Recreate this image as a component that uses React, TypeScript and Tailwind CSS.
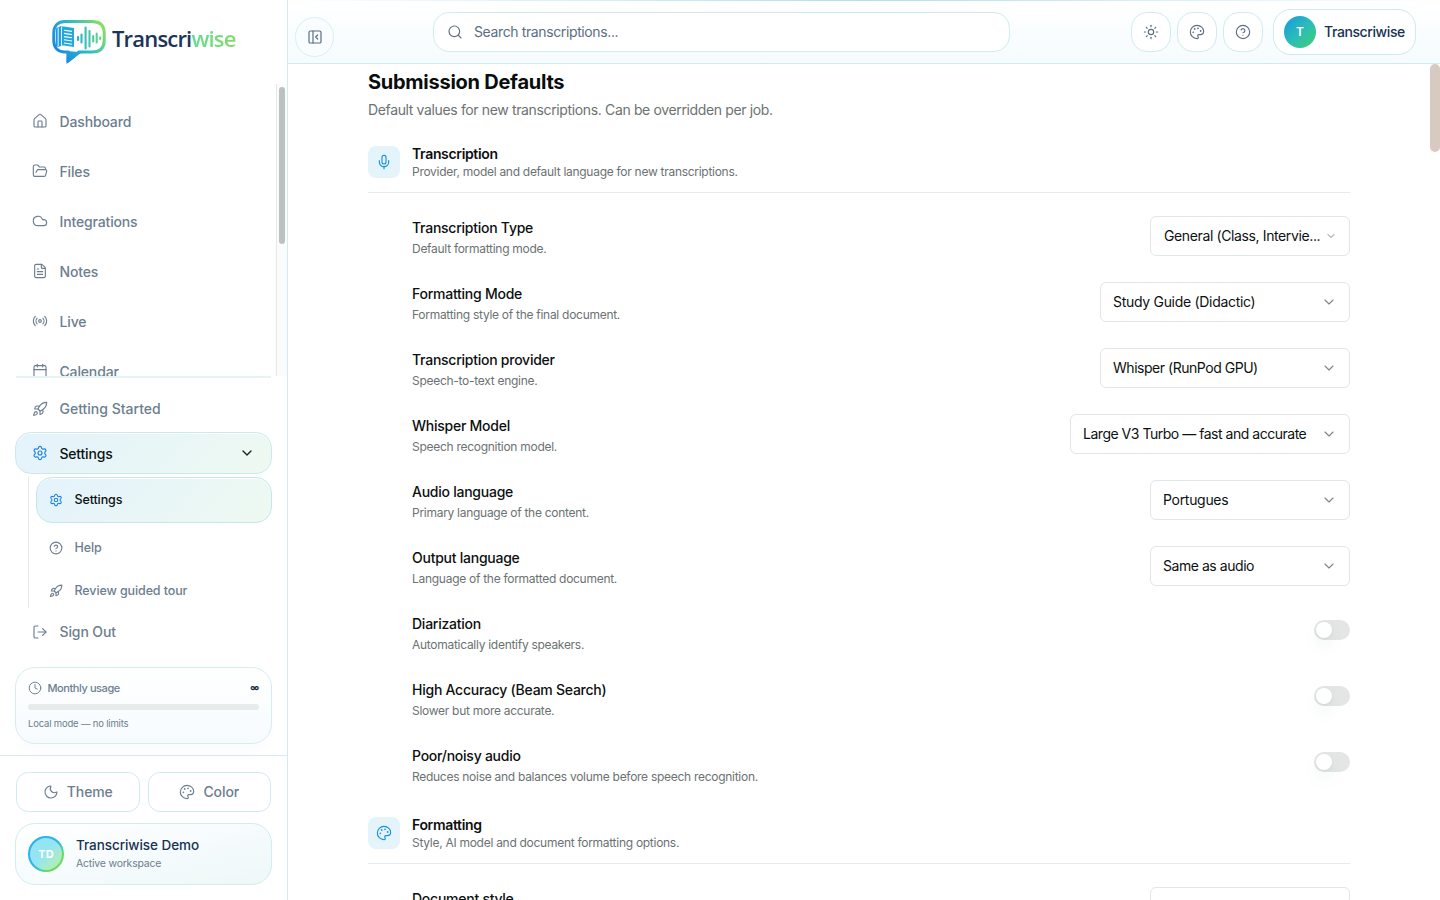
import React from 'react';
import {
  Calendar, ChevronDown, CircleHelp, Clock, Cloud, FileText, FolderOpen, House, LogOut,
  Mic, Moon, Palette, PanelLeftClose, Radio, Rocket, Search, Settings, Sun, LucideIcon,
} from 'lucide-react';

interface NavEntry {
  label: string;
  icon: LucideIcon;
}

interface SettingRow {
  title: string;
  desc: string;
  value?: string;
  control?: string;
  compact?: boolean;
}

const navItems: NavEntry[] = [
  { label: 'Dashboard', icon: House },
  { label: 'Files', icon: FolderOpen },
  { label: 'Integrations', icon: Cloud },
  { label: 'Notes', icon: FileText },
  { label: 'Live', icon: Radio },
  { label: 'Calendar', icon: Calendar },
];

const rows: SettingRow[] = [
  { title: 'Transcription Type', desc: 'Default formatting mode.', value: 'General (Class, Intervie...', control: 'w-[200px] tracking-[-0.38px]', compact: true },
  { title: 'Formatting Mode', desc: 'Formatting style of the final document.', value: 'Study Guide (Didactic)', control: 'w-[250px] tracking-[-0.3px]' },
  { title: 'Transcription provider', desc: 'Speech-to-text engine.', value: 'Whisper (RunPod GPU)', control: 'w-[250px] tracking-[-0.47px]' },
  { title: 'Whisper Model', desc: 'Speech recognition model.', value: 'Large V3 Turbo — fast and accurate', control: 'w-[280px] tracking-[-0.48px]' },
  { title: 'Audio language', desc: 'Primary language of the content.', value: 'Portugues', control: 'w-[200px] tracking-[-0.3px]' },
  { title: 'Output language', desc: 'Language of the formatted document.', value: 'Same as audio', control: 'w-[200px] tracking-[-0.45px]' },
  { title: 'Diarization', desc: 'Automatically identify speakers.' },
  { title: 'High Accuracy (Beam Search)', desc: 'Slower but more accurate.' },
  { title: 'Poor/noisy audio', desc: 'Reduces noise and balances volume before speech recognition.' },
];

const Logo = () => (
  <div className="flex h-[84px] shrink-0 items-start pl-[51px] pt-[19px]">
    <svg width="56" height="46" viewBox="0 0 56 46" fill="none">
      <defs>
        <linearGradient id="bubble" x1="4" y1="34" x2="52" y2="4" gradientUnits="userSpaceOnUse">
          <stop stopColor="#1783e6" />
          <stop offset="0.5" stopColor="#27bcc6" />
          <stop offset="1" stopColor="#8ee05f" />
        </linearGradient>
        <linearGradient id="wave" x1="25" y1="20" x2="51" y2="20" gradientUnits="userSpaceOnUse">
          <stop stopColor="#1fb0cf" />
          <stop offset="1" stopColor="#63dc84" />
        </linearGradient>
      </defs>
      <path d="M14 2.5h27C49 2.5 53.2 6.5 53.2 14v7.500C53.2 29 49 33 41 33H28L17 42l.5-9H14C7 33 2.8 29 2.8 21.5V14C2.8 6.500 7 2.500 14 2.500Z" fill="#fff" stroke="url(#bubble)" strokeWidth="3" strokeLinejoin="round" />
      <path d="M15.5 32v13L29 34.5l5-1Z" fill="url(#bubble)" />
      <path d="M5 9.500c2-2 4-1.500 5-2.500v20c-2 .5-3 1.500-5 0Z" fill="#2099e0" />
      <path d="M9 7.500h4l10 1.500v19l-10-1.500H9Z" fill="#22a8dc" />
      <path d="M7.200 8.500v18.500M10.500 8v18.500" stroke="#fff" strokeWidth=".9" />
      <path d="m13 11.200 8 1.200M13 14.400l8 1.200M13 17.600l8 1.200M13 20.800l8 1.200M13 24l8 1.200" stroke="#fff" strokeWidth="1.1" />
      <path d="M27 18v3M30.500 15.500v8M34.600 8.500v21M38.500 12v15.500M42.200 17v5.500M45.700 14.500v9M49.200 18.500v1.500" stroke="url(#wave)" strokeWidth="2.1" strokeLinecap="round" />
    </svg>
    <span className="ml-[5px] mt-[3px] font-['Open_Sans','Noto_Sans',sans-serif] text-[22px] font-semibold leading-8 tracking-[-0.82px] text-[#1c3458]">
      Transcri<span className="bg-linear-to-r from-[#5fdc93] to-[#84da66] bg-clip-text text-transparent">wise</span>
    </span>
  </div>
);

const Select = ({ row }: { row: SettingRow }) => (
  <button className={`flex h-10 items-center justify-between rounded-md border border-[#e1e7e7] bg-white px-3 text-[14px] text-[#0c1111] ${row.control}`}>
    <span className={row.compact ? '-mt-px ml-px whitespace-nowrap' : '-mt-px whitespace-nowrap'}>{row.value}</span>
    <ChevronDown size={row.compact ? 12 : 16} strokeWidth={row.compact ? 2 : 1.7} className="shrink-0 text-[#808686]" />
  </button>
);

const Toggle = () => (
  <span className="-mt-1 flex h-5 w-9 items-center rounded-full bg-[#e3e6e5] px-0.5">
    <span className="size-4 rounded-full bg-white shadow-[0_8px_16px_rgba(40,130,120,0.07),0_1px_3px_rgba(0,0,0,0.06)]" />
  </span>
);

const SectionHeader = ({ icon: Icon, title, desc }: { icon: LucideIcon; title: string; desc: string }) => (
  <div className="flex h-[47px] items-start gap-3 border-b border-[#e4ebef]">
    <span className="flex size-8 items-center justify-center rounded-lg bg-[#e5f4fb] text-[#1690de]">
      <Icon size={16} strokeWidth={1.7} />
    </span>
    <div>
      <h2 className="-mt-px h-[18px] text-[14px] font-semibold leading-[17px] tracking-[-0.34px] text-[#0c1010]">{title}</h2>
      <p className="text-[12px] leading-[18px] tracking-[-0.28px] text-[#6b7272]">{desc}</p>
    </div>
  </div>
);

const Sidebar = () => (
  <aside className="flex h-full w-72 shrink-0 flex-col border-r border-[#d5eaef] bg-white text-[#6c7e8f]">
    <Logo />
    <div className="flex h-[292px] shrink-0 overflow-hidden">
      <nav className="flex-1 pt-3">
        {navItems.map(({ label, icon: Icon }) => (
          <a key={label} className="flex h-[50px] items-center gap-[11.5px] pl-8">
            <Icon size={16} strokeWidth={1.7} />
            <span className="text-[14px] font-medium tracking-[-0.15px]">{label}</span>
          </a>
        ))}
      </nav>
      <div className="w-[11px] border-l border-[#e6e8e8] bg-[#fafbfb] pl-0.5 pt-[3px]">
        <div className="h-[157px] w-1.5 rounded-full bg-[#bdc0c1]" />
      </div>
    </div>
    <div className="mx-4 h-0.5 shrink-0 bg-[#e4f5f6]" />
    <a className="mt-[10px] flex h-[42px] shrink-0 items-center gap-[11.5px] pl-8">
      <Rocket size={16} strokeWidth={1.7} />
      <span className="-mt-px text-[14px] font-medium">Getting Started</span>
    </a>
    <a className="mx-[15px] mt-0.5 flex h-[42px] shrink-0 items-center gap-[11.5px] rounded-2xl border border-[#cbeaea] bg-linear-135 from-[#e4f2fc] via-[#e8f6f7] to-[#eef9f0] px-4 shadow-[inset_0_1px_0_#fff]">
      <Settings size={16} strokeWidth={1.7} className="text-[#1a80de]" />
      <span className="text-[14px] font-medium tracking-[-0.2px] text-[#0c1212]">Settings</span>
      <ChevronDown size={16} className="ml-auto text-[#182020]" />
    </a>
    <div className="ml-7 mr-[15px] mt-[3px] h-[131px] shrink-0 border-l border-[#e2eaec] pl-[7px]">
      <a className="flex h-[46px] items-center gap-3 rounded-2xl border border-[#c4e8ea] bg-linear-135 from-[#e4f2fc] via-[#e8f6f7] to-[#eef9f0] pl-[11.5px] shadow-[inset_0_1px_0_#fff]">
        <Settings size={14} strokeWidth={1.8} className="text-[#1a80de]" />
        <span className="text-[12.5px] font-medium tracking-[-0.12px] text-[#0c1212]">Settings</span>
      </a>
      <a className="mt-[3px] flex h-[43px] items-center gap-3 pl-[12.5px]">
        <CircleHelp size={14} strokeWidth={1.9} />
        <span className="mt-px text-[12.5px] font-medium tracking-[-0.1px]">Help</span>
      </a>
      <a className="flex h-[43px] items-center gap-3 pl-[12.5px]">
        <Rocket size={14} strokeWidth={1.9} />
        <span className="mt-px text-[12.5px] font-medium tracking-[-0.11px]">Review guided tour</span>
      </a>
    </div>
    <a className="mt-[3px] flex h-[42px] shrink-0 items-center gap-[11.5px] pl-8">
      <LogOut size={16} strokeWidth={1.7} />
      <span className="-mt-px text-[14px] font-medium tracking-[-0.12px]">Sign Out</span>
    </a>
    <div className="mx-[15px] mt-[14px] h-[77px] shrink-0 rounded-[20px] border border-[#d5edef] bg-linear-to-b from-white to-[#f6fbfe] px-3 pt-3 shadow-[0_10px_18px_-8px_rgba(30,80,80,0.04)]">
      <div className="flex h-4 items-center">
        <Clock size={14} strokeWidth={1.6} />
        <span className="ml-[5.5px] text-[11px] font-medium tracking-[-0.42px]">Monthly usage</span>
        <span className="ml-auto text-[9px] font-bold text-[#142744]">∞</span>
      </div>
      <div className="mt-2 h-1.5 rounded-full bg-[#e7ebeb]" />
      <p className="mt-1.5 text-[9.5px] leading-4 tracking-[-0.18px]">Local mode — no limits</p>
    </div>
    <div className="mt-[11px] h-[145px] shrink-0 border-t border-[#d8e9ef] px-[15px] pt-4">
      <div className="flex gap-2 px-px">
        <button className="flex h-10 flex-1 items-center justify-center gap-2 rounded-xl border border-[#d2ebee] bg-white text-[14px] font-medium tracking-[-0.1px]">
          <Moon size={16} strokeWidth={1.7} /><span className="-mt-0.5">Theme</span>
        </button>
        <button className="flex h-10 flex-1 items-center justify-center gap-2 rounded-xl border border-[#d2ebee] bg-white text-[14px] font-medium tracking-[-0.1px]">
          <Palette size={16} strokeWidth={1.7} /><span className="-mt-0.5">Color</span>
        </button>
      </div>
      <div className="mt-[11px] flex h-[62px] items-center gap-3 rounded-[20px] border border-[#d2edef] bg-linear-to-br from-white via-[#f6fbfd] to-[#eef8f7] px-3">
        <span className="flex size-9 items-center justify-center rounded-full bg-linear-to-br from-[#26b4ea] from-50% to-[#67db5c] to-75% p-0.5">
          <span className="flex size-8 items-center justify-center rounded-full bg-linear-to-br from-[#94e4f4] from-45% to-[#afecbd] to-80% text-[11px] font-bold text-white">TD</span>
        </span>
        <div className="mt-px">
          <p className="text-[13.5px] font-medium leading-[18px] tracking-[-0.06px] text-[#173253]">Transcriwise Demo</p>
          <p className="text-[10.5px] leading-[19px] tracking-[-0.22px]">Active workspace</p>
        </div>
      </div>
    </div>
  </aside>
);

const Header = () => (
  <header className="relative flex h-16 shrink-0 items-center border-b border-[#cfe9ec] bg-linear-to-b from-white to-[#f5fbfe] text-[#5b6e83]">
    <div className="absolute inset-x-0 top-0 h-px bg-linear-to-r from-white via-[#aee0ec] to-white" />
    <button className="ml-[7px] mt-[11px] flex h-10 w-[39px] items-center justify-center rounded-full border border-[#d8f1ef] bg-[#fafdff]">
      <PanelLeftClose size={16} strokeWidth={1.8} />
    </button>
    <div className="ml-[99px] flex h-10 w-[577px] items-center gap-[11px] rounded-2xl border border-[#d2ebed] bg-white pl-[13px]">
      <Search size={16} strokeWidth={1.7} />
      <span className="text-[14px] tracking-[-0.38px]">Search transcriptions...</span>
    </div>
    <div className="ml-auto mr-6 flex items-center gap-1.5">
      {[Sun, Palette, CircleHelp].map((Icon, i) => (
        <button key={i} className="flex size-10 items-center justify-center rounded-2xl border border-[#d0ecec] bg-white">
          <Icon size={16} strokeWidth={1.7} />
        </button>
      ))}
      <div className="ml-1 flex h-[46px] w-[143px] items-center gap-2 rounded-[18px] border border-[#cfebeb] bg-white pl-2.5">
        <span className="flex size-8 items-center justify-center rounded-full bg-linear-to-br from-[#1e96df] via-[#2bbcb9] to-[#43cf67] text-[12px] font-semibold text-white">T</span>
        <span className="text-[14px] font-medium tracking-[-0.4px] text-[#173253]">Transcriwise</span>
      </div>
    </div>
  </header>
);

export default function App() {
  return (
    <div className="flex h-[900px] w-[1440px] overflow-hidden bg-white font-['Inter','Liberation_Sans',sans-serif]">
      <Sidebar />
      <div className="flex min-w-0 flex-1 flex-col">
        <Header />
        <div className="flex min-h-0 flex-1">
          <main className="min-w-0 flex-1 overflow-hidden px-20">
            <h1 className="mt-1 text-[20px] font-bold leading-7 tracking-[-0.26px] text-[#090d0d]">Submission Defaults</h1>
            <p className="mb-[26px] mt-1 text-[14px] leading-5 tracking-[-0.36px] text-[#6b7272]">Default values for new transcriptions. Can be overridden per job.</p>
            <SectionHeader icon={Mic} title="Transcription" desc="Provider, model and default language for new transcriptions." />
            <div className="mb-[33px] ml-11 mt-[23px] flex flex-col gap-[26px]">
              {rows.map((row) => (
                <div key={row.title} className="flex h-10 items-center justify-between">
                  <div className="h-10">
                    <h3 className="text-[14px] font-medium leading-6 tracking-[-0.25px] text-[#0c1010]">{row.title}</h3>
                    <p className="text-[12px] leading-[17px] tracking-[-0.28px] text-[#6b7272]">{row.desc}</p>
                  </div>
                  {row.value ? <Select row={row} /> : <Toggle />}
                </div>
              ))}
            </div>
            <SectionHeader icon={Palette} title="Formatting" desc="Style, AI model and document formatting options." />
            <div className="ml-11 mt-[23px] flex h-10 justify-between">
              <h3 className="text-[14px] font-medium leading-6 tracking-[-0.25px] text-[#0c1010]">Document style</h3>
              <div className="h-10 w-[200px] rounded-md border border-[#e1e7e7] bg-white" />
            </div>
          </main>
          <div className="w-2.5 shrink-0">
            <div className="h-[88px] rounded-full bg-[#d8cac1]" />
          </div>
        </div>
      </div>
    </div>
  );
}
